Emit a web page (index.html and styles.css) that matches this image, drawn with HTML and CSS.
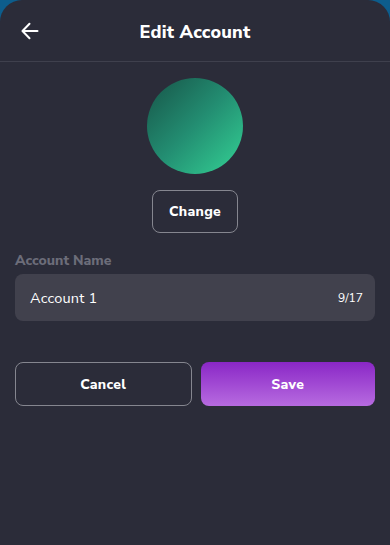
FILE: index.html
```html
<!doctype html>
<html>
  <head>
    <title>Edit Account</title>
    <meta charset="UTF-8">
    <meta name="viewport" content="width=device-width, initial-scale=1">
    <link rel="stylesheet" href="styles.css">
  </head>
  <body>
    <div class="sheet">
      <div class="topbar">
        <a class="back" href="#">
          <svg width="18" height="18" viewBox="0 0 18 18" fill="none" stroke="white" stroke-width="2" stroke-linecap="round" stroke-linejoin="round">
            <path d="M16.5 9H1.8"/>
            <path d="M8.5 1.8L1.5 9l7 7.2"/>
          </svg>
        </a>
        <h1>Edit Account</h1>
      </div>

      <div class="content">
        <div class="avatar"></div>
        <button class="btn-outline change">Change</button>

        <label class="field-label">Account Name</label>
        <div class="field">
          <span class="value">Account 1</span>
          <span class="count">9/17</span>
        </div>

        <div class="actions">
          <button class="btn-outline">Cancel</button>
          <button class="btn-save">Save</button>
        </div>
      </div>
    </div>
  </body>
</html>
```

FILE: styles.css
```css
* {
  box-sizing: border-box;
}

/* page background behind the sheet */
body {
  margin: 0;
  background: #0d5d8c;
  font-family: "Nunito Sans", Lato, "Noto Sans", sans-serif;
  color: white;
}

/* dark sheet with rounded top */
.sheet {
  background: #2b2c39;
  min-height: 545px;
  border-radius: 22px 22px 0 0;
}

/* Header */
.topbar {
  position: relative;
  height: 62px;
  border-bottom: 1px solid #3f404d;
  display: flex;
  align-items: center;
  justify-content: center;
  padding-top: 2px;
}

.topbar h1 {
  margin: 0;
  font-size: 18px;
  font-weight: 800;
  letter-spacing: 0.2px;
}

.back {
  position: absolute;
  left: 21px;
  top: 22px;
  display: block;
  height: 18px;
}

/* Main column */
.content {
  padding: 16px 15px 0;
  display: flex;
  flex-direction: column;
  align-items: center;
}

.avatar {
  width: 96px;
  height: 96px;
  border-radius: 50%;
  background: linear-gradient(135deg, #175448 0%, #238e72 50%, #34d395 100%);
}

button {
  font-family: inherit;
  font-weight: 800;
  font-size: 14px;
  letter-spacing: 0.3px;
  color: white;
  cursor: pointer;
}

.btn-outline {
  background: transparent;
  border: 1px solid #85868f;
  border-radius: 8px;
}

.change {
  margin-top: 16px;
  width: 86px;
  height: 43px;
}

.field-label {
  align-self: flex-start;
  margin-top: 18px;
  font-size: 14px;
  font-weight: 800;
  color: #6c6d79;
}

.field {
  margin-top: 4px;
  width: 100%;
  height: 47px;
  background: #41414d;
  border-radius: 8px;
  padding: 0 12px 0 15px;
  display: flex;
  align-items: center;
  justify-content: space-between;
}

.field .value {
  font-size: 14.5px;
  letter-spacing: 0.2px;
}

.field .count {
  font-size: 12px;
}

.actions {
  margin-top: 41px;
  width: 100%;
  display: flex;
  gap: 9px;
}

.actions button {
  flex: 1;
  height: 44px;
}

.btn-save {
  border: none;
  border-radius: 8px;
  background: linear-gradient(180deg, #8a27c6 0%, #b76be0 100%);
}
```
